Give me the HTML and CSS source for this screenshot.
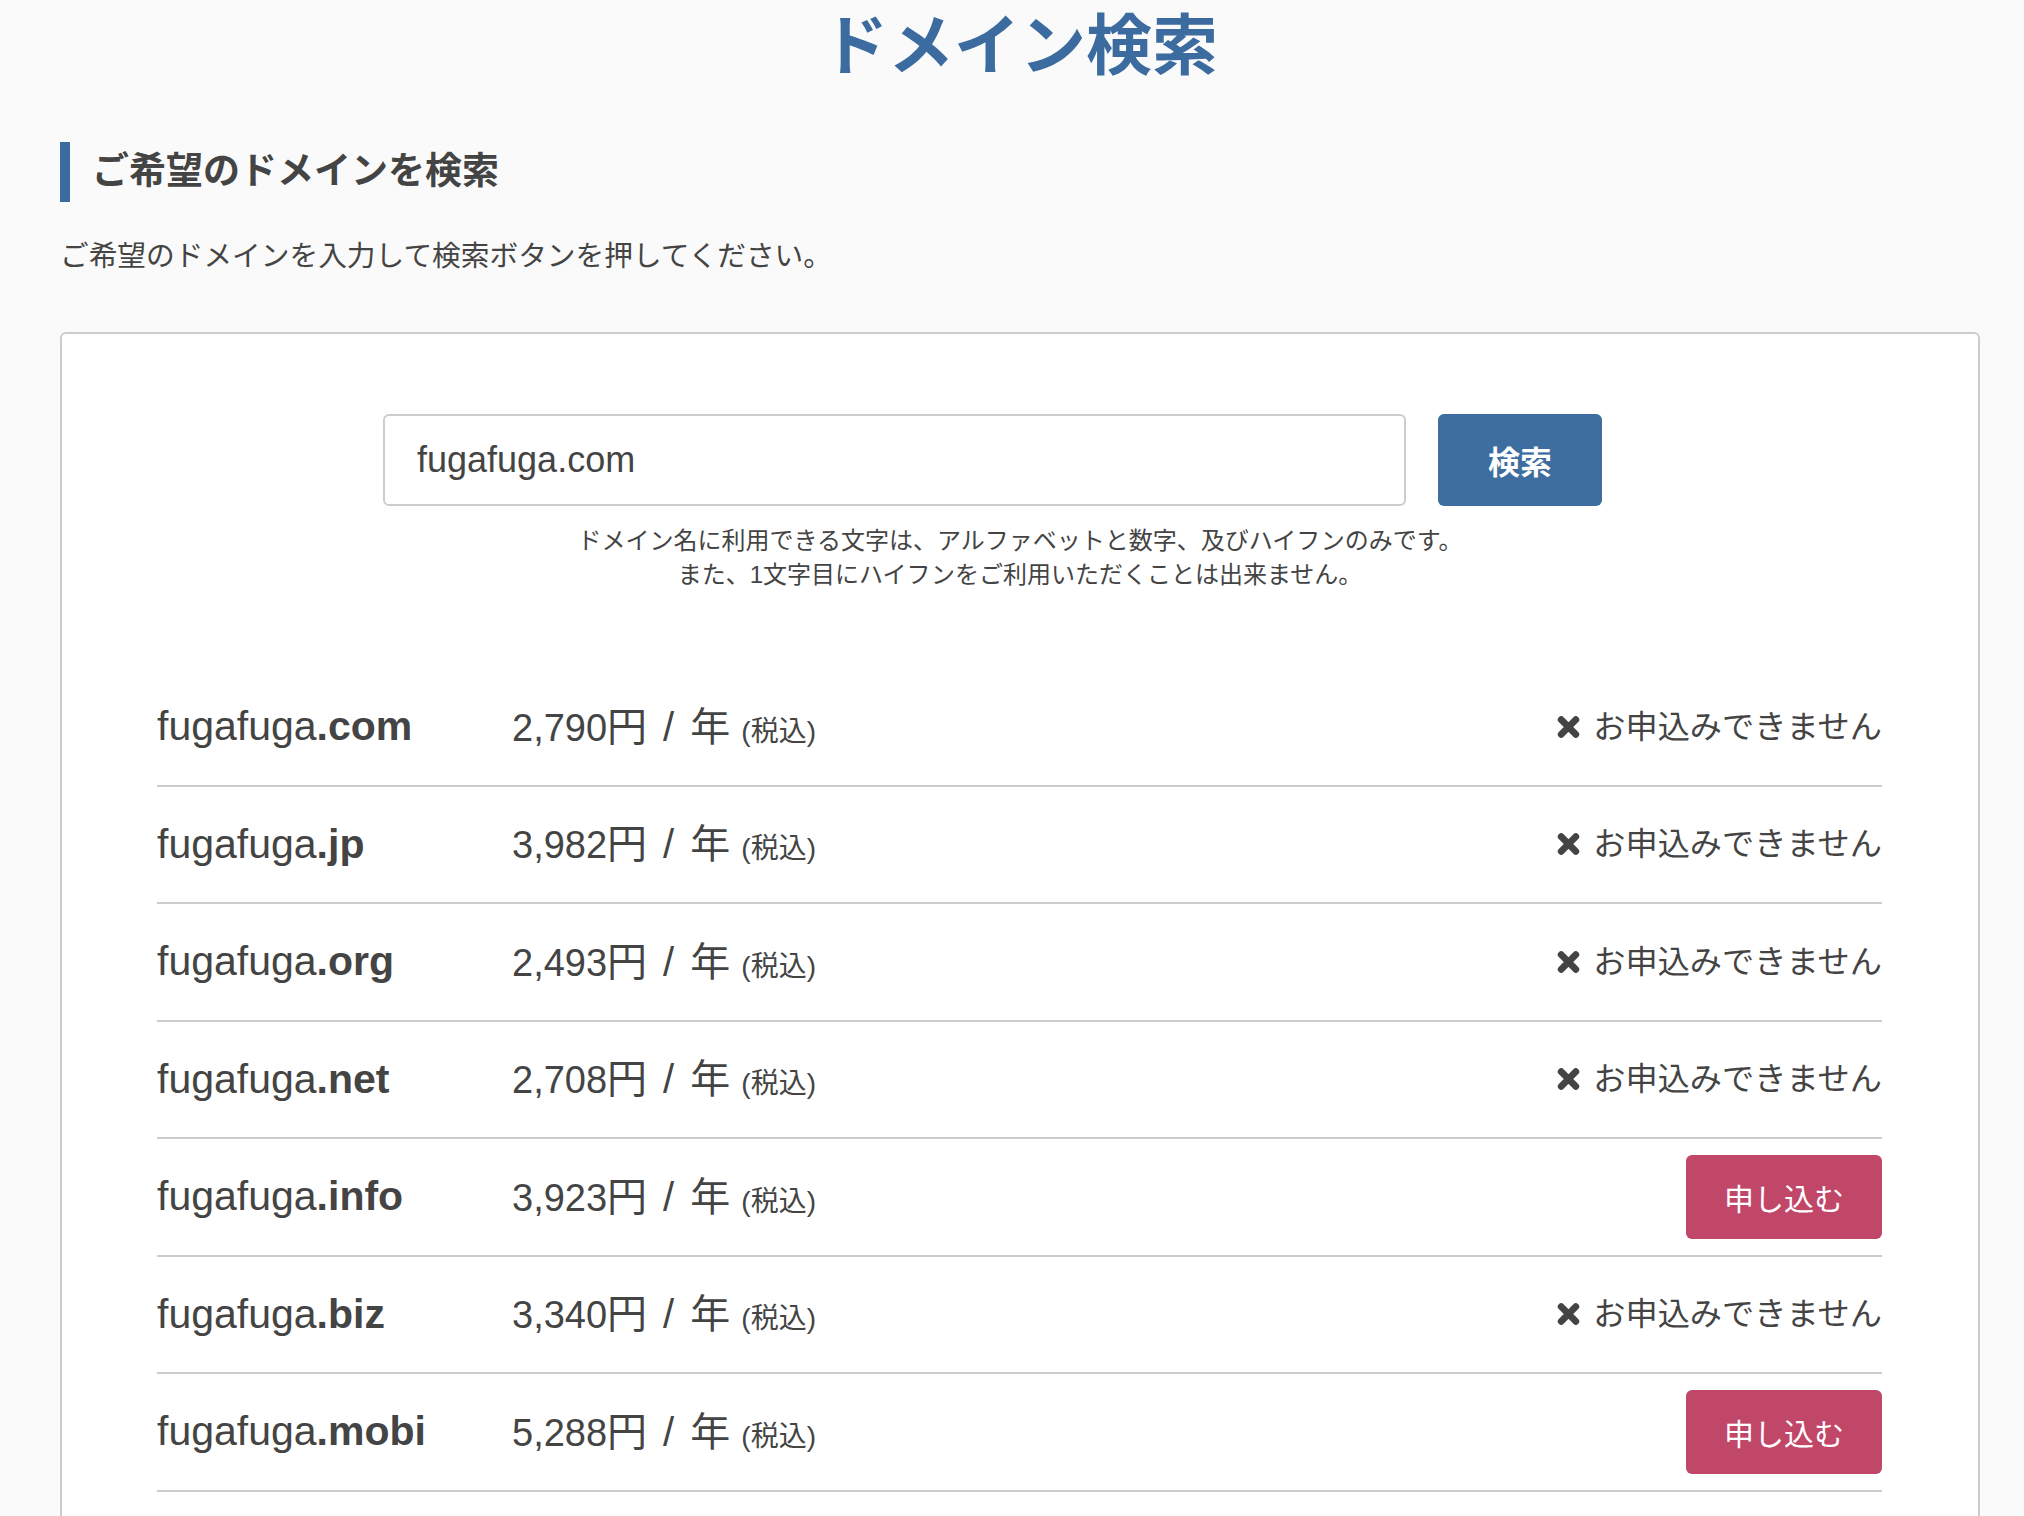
FILE: index.html
```html
<!DOCTYPE html>
<html lang="ja">
<head>
<meta charset="utf-8">
<title>ドメイン検索</title>
<link rel="stylesheet" href="styles.css">
</head>
<body>
<div class="page">
  <h1 class="title">ドメイン検索</h1>
  <h2 class="section-heading">ご希望のドメインを検索</h2>
  <p class="lead">ご希望のドメインを入力して検索ボタンを押してください。</p>

  <div class="card">
    <form class="search">
      <input class="search-input" type="text" value="fugafuga.com">
      <button class="search-btn" type="button">検索</button>
    </form>
    <p class="note">ドメイン名に利用できる文字は、アルファベットと数字、及びハイフンのみです。<br>また、1文字目にハイフンをご利用いただくことは出来ません。</p>

    <ul class="results">
      <li class="row">
        <span class="domain">fugafuga<b>.com</b></span>
        <span class="price"><span class="num">2,790</span>円<span class="sep">/</span>年 <small>(税込)</small></span>
        <span class="status"><svg class="x" viewBox="0 0 22 22"><path d="M4 4L18 18M18 4L4 18"/></svg>お申込みできません</span>
      </li>
      <li class="row">
        <span class="domain">fugafuga<b>.jp</b></span>
        <span class="price"><span class="num">3,982</span>円<span class="sep">/</span>年 <small>(税込)</small></span>
        <span class="status"><svg class="x" viewBox="0 0 22 22"><path d="M4 4L18 18M18 4L4 18"/></svg>お申込みできません</span>
      </li>
      <li class="row">
        <span class="domain">fugafuga<b>.org</b></span>
        <span class="price"><span class="num">2,493</span>円<span class="sep">/</span>年 <small>(税込)</small></span>
        <span class="status"><svg class="x" viewBox="0 0 22 22"><path d="M4 4L18 18M18 4L4 18"/></svg>お申込みできません</span>
      </li>
      <li class="row">
        <span class="domain">fugafuga<b>.net</b></span>
        <span class="price"><span class="num">2,708</span>円<span class="sep">/</span>年 <small>(税込)</small></span>
        <span class="status"><svg class="x" viewBox="0 0 22 22"><path d="M4 4L18 18M18 4L4 18"/></svg>お申込みできません</span>
      </li>
      <li class="row">
        <span class="domain">fugafuga<b>.info</b></span>
        <span class="price"><span class="num">3,923</span>円<span class="sep">/</span>年 <small>(税込)</small></span>
        <button class="apply" type="button">申し込む</button>
      </li>
      <li class="row">
        <span class="domain">fugafuga<b>.biz</b></span>
        <span class="price"><span class="num">3,340</span>円<span class="sep">/</span>年 <small>(税込)</small></span>
        <span class="status"><svg class="x" viewBox="0 0 22 22"><path d="M4 4L18 18M18 4L4 18"/></svg>お申込みできません</span>
      </li>
      <li class="row">
        <span class="domain">fugafuga<b>.mobi</b></span>
        <span class="price"><span class="num">5,288</span>円<span class="sep">/</span>年 <small>(税込)</small></span>
        <button class="apply" type="button">申し込む</button>
      </li>
    </ul>
  </div>
</div>
</body>
</html>
```

FILE: styles.css
```css
html, body {
  margin: 0;
  padding: 0;
  background: #fafafa;
}
body {
  font-family: "Liberation Sans", "Noto Sans CJK JP", sans-serif;
  color: #444;
}
.page {
  width: 1920px;
  margin-left: 60px;
}
.title {
  margin: 0;
  padding-top: 13px;
  font-size: 66px;
  line-height: 1;
  font-weight: 700;
  color: #3c6c9f;
  text-align: center;
}
.section-heading {
  margin: 63px 0 0;
  height: 60px;
  border-left: 10px solid #3c6c9f;
  padding-left: 22px;
  font-size: 37px;
  line-height: 60px;
  font-weight: 700;
  color: #444;
}
.lead {
  margin: 34px 0 0;
  font-size: 28.7px;
  line-height: 40px;
  color: #444;
}
.card {
  margin-top: 56px;
  background: #fff;
  border: 2px solid #ccc;
  border-radius: 6px;
  padding: 80px 0 80px;
}
.search {
  display: flex;
  gap: 32px;
  margin: 0 0 0 321px;
}
.search-input {
  box-sizing: border-box;
  width: 1023px;
  height: 92px;
  border: 2px solid #ccc;
  border-radius: 6px;
  padding: 0 32px;
  font-family: "Liberation Sans", "Noto Sans CJK JP", sans-serif;
  font-size: 36px;
  color: #444;
  background: #fff;
  outline: none;
}
.search-btn {
  width: 164px;
  height: 92px;
  border: none;
  border-radius: 6px;
  background: #3e6d9f;
  color: #fff;
  font-family: "Noto Sans CJK JP", sans-serif;
  font-size: 32px;
  font-weight: 700;
  padding: 0;
}
.note {
  margin: 18px 0 0;
  text-align: center;
  font-size: 24px;
  line-height: 34px;
  color: #444;
}
.results {
  list-style: none;
  margin: 77px 96px 0 95px;
  padding: 0;
}
.row {
  display: flex;
  align-items: center;
  height: 115.5px;
  border-bottom: 2px solid #ccc;
}
.domain {
  width: 355px;
  flex: none;
  font-size: 41px;
  line-height: 1;
}
.domain b {
  font-weight: 700;
}
.price {
  font-size: 40px;
  line-height: 1;
  white-space: pre;
}
.price .num {
  font-size: 38px;
}
.price .sep {
  margin: 0 16px;
}
.price small {
  font-size: 28px;
}
.status {
  margin-left: auto;
  display: flex;
  align-items: center;
  gap: 13px;
  font-size: 32.2px;
  line-height: 1;
  color: #444;
}
.x {
  width: 23px;
  height: 24px;
  stroke: #444;
  stroke-width: 6.5;
  stroke-linecap: round;
  fill: none;
}
.apply {
  margin-left: auto;
  height: 84px;
  padding: 0 38px;
  border: none;
  border-radius: 6px;
  background: #c14769;
  color: #fff;
  font-family: "Noto Sans CJK JP", sans-serif;
  font-size: 30px;
  line-height: 1;
}
```
